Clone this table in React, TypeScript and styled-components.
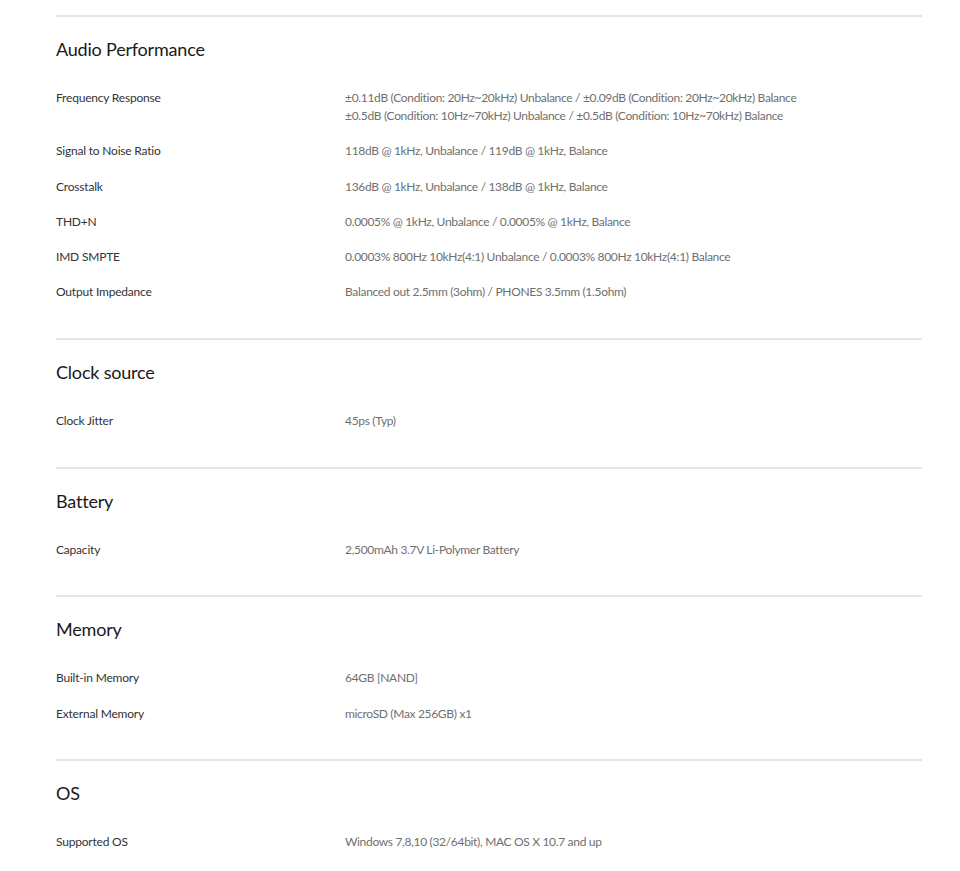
import React from "react";
import styled, { createGlobalStyle } from "styled-components";

const Global = createGlobalStyle`
  html, body { margin: 0; padding: 0; background: #fff; }
  body { font-family: "Segoe UI", Lato, "Open Sans", sans-serif; }
`;

const Page = styled.div`
  padding: 15px 38px 0 56px;
`;

const Section = styled.section`
  border-top: 2px solid #e6e6e6;
  padding: 20px 0 36.6px;
`;

const Title = styled.h2`
  margin: 0 0 28.2px;
  font-size: 18px;
  line-height: 24px;
  font-weight: 400;
  letter-spacing: -0.2px;
  color: #1a1a1a;
`;

const Rows = styled.div`
  display: flex;
  flex-direction: column;
  gap: 17.2px;
`;

const Row = styled.div`
  display: grid;
  grid-template-columns: 289px 1fr;
  font-size: 12px;
  line-height: 18px;
`;

const Label = styled.div`
  color: #333;
  letter-spacing: -0.2px;
`;

const Value = styled.div`
  color: #6f6f6f;
  letter-spacing: -0.32px;
`;

type Spec = { label: string; values: string[] };
type Group = { title: string; specs: Spec[] };

const groups: Group[] = [
  {
    title: "Audio Performance",
    specs: [
      {
        label: "Frequency Response",
        values: [
          "±0.11dB (Condition: 20Hz~20kHz) Unbalance / ±0.09dB (Condition: 20Hz~20kHz) Balance",
          "±0.5dB (Condition: 10Hz~70kHz) Unbalance / ±0.5dB (Condition: 10Hz~70kHz) Balance",
        ],
      },
      { label: "Signal to Noise Ratio", values: ["118dB @ 1kHz, Unbalance / 119dB @ 1kHz, Balance"] },
      { label: "Crosstalk", values: ["136dB @ 1kHz, Unbalance / 138dB @ 1kHz, Balance"] },
      { label: "THD+N", values: ["0.0005% @ 1kHz, Unbalance / 0.0005% @ 1kHz, Balance"] },
      { label: "IMD SMPTE", values: ["0.0003% 800Hz 10kHz(4:1) Unbalance / 0.0003% 800Hz 10kHz(4:1) Balance"] },
      { label: "Output Impedance", values: ["Balanced out 2.5mm (3ohm) / PHONES 3.5mm (1.5ohm)"] },
    ],
  },
  { title: "Clock source", specs: [{ label: "Clock Jitter", values: ["45ps (Typ)"] }] },
  { title: "Battery", specs: [{ label: "Capacity", values: ["2,500mAh 3.7V Li-Polymer Battery"] }] },
  {
    title: "Memory",
    specs: [
      { label: "Built-in Memory", values: ["64GB [NAND]"] },
      { label: "External Memory", values: ["microSD (Max 256GB) x1"] },
    ],
  },
  { title: "OS", specs: [{ label: "Supported OS", values: ["Windows 7,8,10 (32/64bit), MAC OS X 10.7 and up"] }] },
];

export default function App() {
  return (
    <Page>
      <Global />
      {groups.map((g) => (
        <Section key={g.title}>
          <Title>{g.title}</Title>
          <Rows>
            {g.specs.map((s) => (
              <Row key={s.label}>
                <Label>{s.label}</Label>
                <Value>
                  {s.values.map((v) => (
                    <div key={v}>{v}</div>
                  ))}
                </Value>
              </Row>
            ))}
          </Rows>
        </Section>
      ))}
    </Page>
  );
}
